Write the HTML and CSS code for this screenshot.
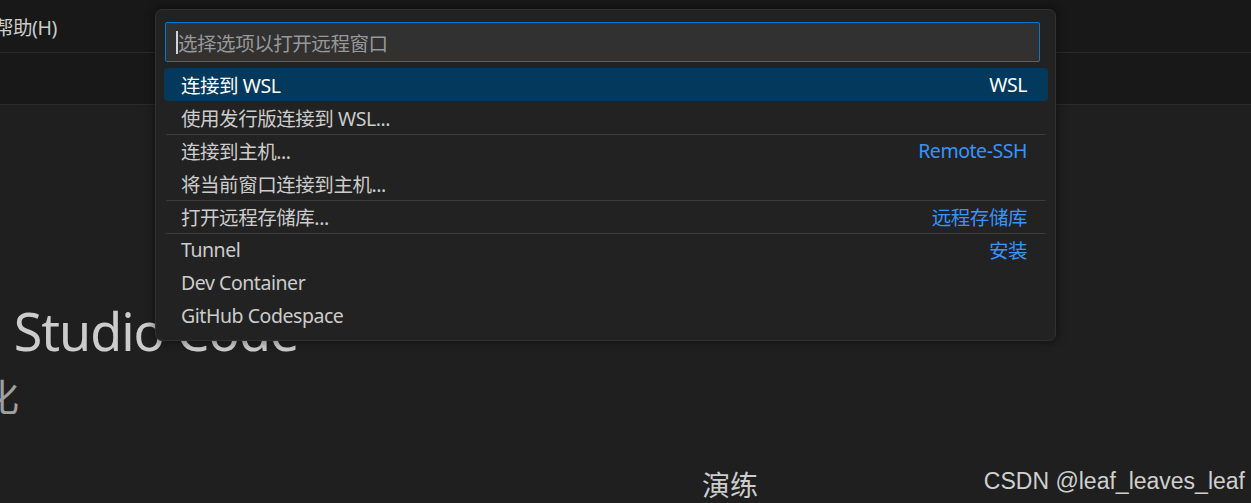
FILE: index.html
```html
<!DOCTYPE html>
<html lang="zh-CN">
  <head>
    <meta charset="utf-8">
    <title>远程窗口</title>
    <link rel="stylesheet" href="styles.css">
  </head>
  <body>
    <div class="titlebar">
      <div class="menu">帮助(H)</div>
    </div>
    <div class="tabs"></div>
    <div class="editor">
      <div class="hero">
        <h1 class="title">Visual Studio Code</h1>
        <div class="subtitle">编辑进化</div>
      </div>
      <div class="columns">
        <div class="col"></div>
        <div class="col">
          <h2 class="heading">演练</h2>
        </div>
      </div>
    </div>

    <div class="quickpick">
      <div class="inputbox">
        <span class="caret"></span>
        <span class="placeholder">选择选项以打开远程窗口</span>
      </div>
      <div class="list">
        <div class="row active"><span>连接到 WSL</span><span class="label">WSL</span></div>
        <div class="row"><span>使用发行版连接到 WSL...</span></div>
        <div class="row sep"><span>连接到主机...</span><span class="label">Remote-SSH</span></div>
        <div class="row"><span>将当前窗口连接到主机...</span></div>
        <div class="row sep"><span>打开远程存储库...</span><span class="label">远程存储库</span></div>
        <div class="row sep"><span>Tunnel</span><span class="label">安装</span></div>
        <div class="row"><span>Dev Container</span></div>
        <div class="row"><span>GitHub Codespace</span></div>
      </div>
    </div>

    <div class="watermark">CSDN @leaf_leaves_leaf</div>
  </body>
</html>
```

FILE: styles.css
```css
* {
  box-sizing: border-box;
  margin: 0;
}
body {
  position: relative;
  width: 1251px;
  height: 503px;
  overflow: hidden;
  background: #1f1f1f;
  color: #cccccc;
  font-family: "Noto Sans", "Noto Sans CJK SC", sans-serif;
  font-size: 19.5px;
  letter-spacing: -0.45px;
}

/* window chrome */
.titlebar {
  height: 53px;
  background: #181818;
  border-bottom: 1px solid #2b2b2b;
  display: flex;
  align-items: center;
}
.menu {
  margin-left: -6px;
}
.tabs {
  height: 52px;
  background: #181818;
  border-bottom: 1px solid #2b2b2b;
}

/* welcome page behind the picker */
.hero {
  padding-top: 194px;
}
.title {
  font-size: 52px;
  font-weight: 400;
  line-height: 64px;
  letter-spacing: -1px;
  margin-left: -137px;
  white-space: nowrap;
  color: #cccccc;
}
.subtitle {
  font-size: 38px;
  line-height: 46px;
  letter-spacing: 0;
  margin-top: 10px;
  margin-left: -133px;
  color: #a0a0a0;
}
.columns {
  display: grid;
  grid-template-columns: 702px 1fr;
  margin-top: 48px;
}
.heading {
  font-size: 28px;
  font-weight: 400;
  line-height: 36px;
  letter-spacing: 0;
  color: #cccccc;
}

/* quick pick */
.quickpick {
  position: absolute;
  left: 155px;
  top: 9px;
  width: 901px;
  background: #222222;
  border: 1px solid #313131;
  border-radius: 7px;
  box-shadow: 0 0 8px 2px rgba(0, 0, 0, 0.36);
  padding: 12px 7px 8px 8px;
}
.inputbox {
  margin-left: 1px;
  width: 875px;
  height: 40px;
  background: #313131;
  border: 1px solid #0078d4;
  border-radius: 2px;
  display: flex;
  align-items: center;
  padding-left: 10px;
}
.caret {
  width: 2px;
  height: 23px;
  background: #d4d4d4;
}
.placeholder {
  color: #989898;
}
.list {
  margin-top: 6px;
}
.row {
  height: 33px;
  display: flex;
  align-items: center;
  justify-content: space-between;
  padding: 0 21px 0 17px;
  border-radius: 4px;
}
.row.sep {
  background: linear-gradient(#3c3c3c, #3c3c3c) no-repeat 2px 0 / calc(100% - 4px) 1px;
}
.row.active {
  background: #04395e;
  color: #ffffff;
}
.label {
  color: #3794ff;
}
.row.active .label {
  color: #ffffff;
}

.watermark {
  position: absolute;
  right: 6px;
  bottom: 8px;
  font-family: "Liberation Sans", sans-serif;
  font-size: 23px;
  letter-spacing: 0;
  color: #cfcfcf;
}
```
